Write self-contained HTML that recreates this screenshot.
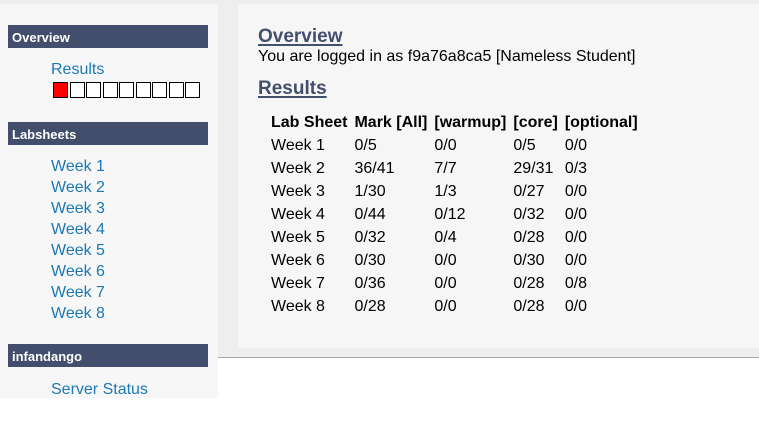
<!DOCTYPE html>
<html><head><style>
*{margin:0;padding:0;box-sizing:border-box}
body{width:759px;height:435px;background:#fff;font-family:"Liberation Sans",sans-serif;position:relative;overflow:hidden}
.top{position:absolute;left:0;top:0;width:759px;height:358px;background:#eee;border-bottom:1px solid #aaa}
.side{position:absolute;left:0;top:4px;width:218px;height:394px;background:#f7f7f7}
.hd{position:absolute;left:8px;width:200px;height:23px;background:#424e6c;color:#fff;font-weight:bold;font-size:13px;padding:5px 0 0 4px}
.lk{position:absolute;left:51px;color:#1b78b4;font-size:16px;line-height:21px}
.box{position:absolute;top:82px;width:15px;height:16px;border:1.5px solid #000;background:#fff}
.main{position:absolute;left:238px;top:4px;width:521px;height:344px;background:#f6f6f6}
h2{position:absolute;left:258px;font-size:19px;color:#444f6d;text-decoration:underline;text-decoration-thickness:2px;text-underline-offset:2px}
.t{position:absolute;font-size:16px;color:#000}
table{position:absolute;left:268px;top:111px;border-collapse:collapse;font-size:16px}
td,th{padding:0 4px 0 3px;height:23px;text-align:left;white-space:nowrap}
</style></head><body>
<div class="top"></div>
<div class="side"></div>
<div class="hd" style="top:25px">Overview</div>
<div class="lk" style="top:59px">Results</div>
<div class="box" style="left:53px;background:#f00"></div>
<div class="box" style="left:69.5px"></div>
<div class="box" style="left:86px"></div>
<div class="box" style="left:102.5px"></div>
<div class="box" style="left:119px"></div>
<div class="box" style="left:135.5px"></div>
<div class="box" style="left:152px"></div>
<div class="box" style="left:168.5px"></div>
<div class="box" style="left:185px"></div>
<div class="hd" style="top:122px">Labsheets</div>
<div class="lk" style="top:156px">Week 1<br>Week 2<br>Week 3<br>Week 4<br>Week 5<br>Week 6<br>Week 7<br>Week 8</div>
<div class="hd" style="top:344px">infandango</div>
<div class="lk" style="top:379px">Server Status</div>
<div class="main"></div>
<h2 style="top:26px">Overview</h2>
<div class="t" style="left:258px;top:48px">You are logged in as f9a76a8ca5 [Nameless Student]</div>
<h2 style="top:78px">Results</h2>
<table>
<tr><th>Lab Sheet</th><th>Mark [All]</th><th>[warmup]</th><th>[core]</th><th>[optional]</th></tr>
<tr><td>Week 1</td><td>0/5</td><td>0/0</td><td>0/5</td><td>0/0</td></tr>
<tr><td>Week 2</td><td>36/41</td><td>7/7</td><td>29/31</td><td>0/3</td></tr>
<tr><td>Week 3</td><td>1/30</td><td>1/3</td><td>0/27</td><td>0/0</td></tr>
<tr><td>Week 4</td><td>0/44</td><td>0/12</td><td>0/32</td><td>0/0</td></tr>
<tr><td>Week 5</td><td>0/32</td><td>0/4</td><td>0/28</td><td>0/0</td></tr>
<tr><td>Week 6</td><td>0/30</td><td>0/0</td><td>0/30</td><td>0/0</td></tr>
<tr><td>Week 7</td><td>0/36</td><td>0/0</td><td>0/28</td><td>0/8</td></tr>
<tr><td>Week 8</td><td>0/28</td><td>0/0</td><td>0/28</td><td>0/0</td></tr>
</table>
</body></html>
